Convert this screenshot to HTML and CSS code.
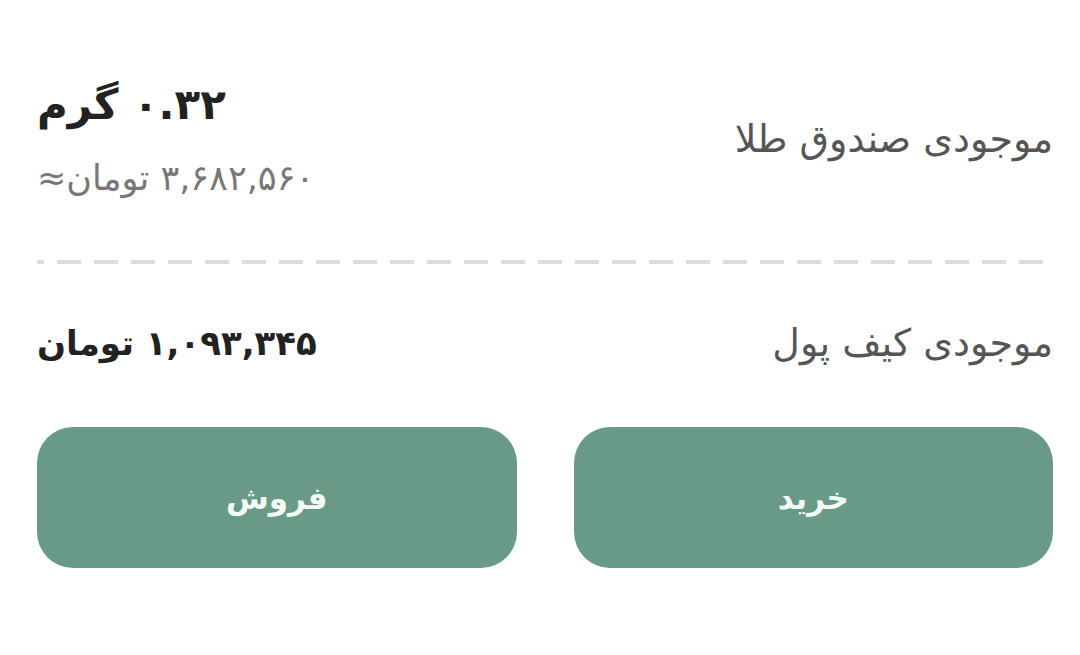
FILE: index.html
```html
<!DOCTYPE html>
<html lang="fa" dir="rtl">
<head>
<meta charset="utf-8">
<title>موجودی</title>
<link rel="stylesheet" href="styles.css">
</head>
<body>
<div class="wallet">
	<div class="row row-gold">
		<div class="label">موجودی صندوق طلا</div>
		<div class="value">
			<div class="amount big">۰.۳۲ گرم</div>
			<div class="approx">۳,۶۸۲,۵۶۰ تومان≈</div>
		</div>
	</div>

	<div class="dashes"></div>

	<div class="row row-cash">
		<div class="label">موجودی کیف پول</div>
		<div class="amount">۱,۰۹۳,۳۴۵ تومان</div>
	</div>

	<div class="actions">
		<button class="btn">خرید</button>
		<button class="btn">فروش</button>
	</div>
</div>
</body>
</html>
```

FILE: styles.css
```css
html, body {margin: 0; background: #fff;}
body {font-family: "DejaVu Sans", "Noto Sans", sans-serif; color: #222;}
.wallet {padding: 80px 27px 0 37px;}
.row {display: flex; justify-content: space-between; align-items: center;}
.label {font-size: 38px; line-height: 46px; color: #555;}
.value {display: flex; flex-direction: column; align-items: flex-end; gap: 28px;}
.amount {font-size: 34px; line-height: 46px; font-weight: bold; color: #222;}
.amount.big {font-size: 42px; line-height: 50px;}
.approx {font-size: 35px; line-height: 40px; color: #777;}
.dashes {height: 4px; margin: 62px 10px 56px 0; background: repeating-linear-gradient(to left, #ddd 0 24px, transparent 24px 37px);}
.actions {display: flex; gap: 57px; margin-top: 61px;}
.btn {flex: 1; height: 141px; border: 0; border-radius: 36px; background: #699a87; color: #f4faf7; font: bold 31px "DejaVu Sans", sans-serif;}
```
